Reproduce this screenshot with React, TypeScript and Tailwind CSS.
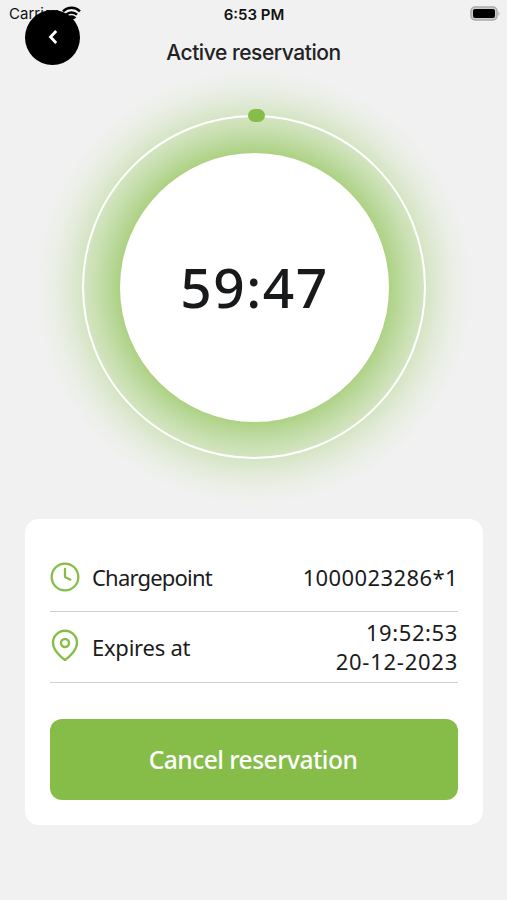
import React from 'react';

interface DetailRowProps {
  icon: React.ReactNode;
  label: React.ReactNode;
  children: React.ReactNode;
}

const ClockIcon: React.FC = () => (
  <svg className="w-8 h-8 -mt-0.5" viewBox="0 0 24 24" fill="none" stroke="#86bd49" strokeWidth="1.7" strokeLinecap="round" strokeLinejoin="round">
    <circle cx="12" cy="12" r="10" />
    <path d="M12 6v6l4 2" />
  </svg>
);

const PinIcon: React.FC = () => (
  <svg className="w-8 h-8 -mt-1" viewBox="0 0 24 24" fill="none" stroke="#86bd49" strokeWidth="1.8" strokeLinecap="round" strokeLinejoin="round">
    <path d="M21 10.300c0 4-2.300 7-5.500 10.100L12 23.300l-3.500-2.900C5.300 17.300 3 14.300 3 10.300a9 9 0 0 1 18 0z" />
    <circle cx="12" cy="10.500" r="3" />
  </svg>
);

const WifiIcon: React.FC = () => (
  <svg className="w-[19px] h-[14px] -mt-0.5" viewBox="0 0 19 14" fill="none" stroke="#000" strokeWidth="2.500">
    <path d="M1 5.300a12.200 12.200 0 0 1 17 0" />
    <path d="M4 8.700a7.900 7.900 0 0 1 11 0" />
    <path d="M6.800 11.500a3.900 3.900 0 0 1 5.400 0L9.500 13z" />
  </svg>
);

const StatusBar: React.FC = () => (
  <div className="h-[27px] grid grid-cols-3 items-center pl-[9px] pr-[7px] text-[#111]">
    <div className="flex items-center gap-[3px]">
      <span className="w-[50px] text-[15px] leading-none">Carrier</span>
      <WifiIcon />
    </div>
    <span className="pt-px -ml-px text-center text-[15px] leading-none font-semibold">6:53 PM</span>
    <svg className="justify-self-end w-[30px] h-[15px]" viewBox="0 0 30 15">
      <rect x="1" y="1" width="26" height="13" rx="4" fill="#ccc" stroke="#aaa" strokeWidth="1.500" />
      <rect x="3" y="3" width="22" height="9" rx="2" fill="#000" />
      <path d="M28.400 5.200c1.400.8 1.400 3.800 0 4.600z" fill="#aaa" />
    </svg>
  </div>
);

/* Countdown with glow and progress ring */
const Countdown: React.FC<{ time: string }> = ({ time }) => (
  <div className="relative w-[452px] h-[450px] rounded-full flex items-center justify-center bg-[radial-gradient(circle_closest-side,#add182_0%,#add182_59.500%,#bddaa0_66%,#cce1b6_72%,#d8e6c9_78%,#e4ebdb_84%,#ecefe8_90%,#f1f1f1_97%)]">
    <div className="w-[344px] h-[344px] rounded-full border-2 border-white flex items-center justify-center">
      <div className="w-[269px] h-[269px] rounded-full bg-white flex items-center justify-center">
        <span className="-mt-0.5 ml-px font-['Noto_Sans',sans-serif] font-medium text-[55px] leading-none tracking-[1.500px] text-[#18191b]">
          {time}
        </span>
      </div>
    </div>
    <div className="absolute left-[220px] top-[47px] w-[17px] h-[13px] rounded-[7px] bg-[#86bd49]" />
  </div>
);

const DetailRow: React.FC<DetailRowProps> = ({ icon, label, children }) => (
  <div className="flex items-center border-b border-[#d0d0d0]">
    <div className="-ml-px">{icon}</div>
    <span className="ml-[11px] flex-1 text-[22px]">{label}</span>
    <div className="text-right text-[22px] leading-[29px]">{children}</div>
  </div>
);

export default function App() {
  return (
    <div className="w-[507px] h-[900px] overflow-hidden bg-[#f1f1f1] flex flex-col font-['Inter','Liberation_Sans',sans-serif]">
      <StatusBar />
      <header className="relative -mt-[17px] h-[55px] shrink-0 grid grid-cols-[55px_1fr_55px] px-[25px]">
        <button className="w-[55px] h-[55px] rounded-full bg-black flex items-center justify-center">
          <svg className="w-[10px] h-[14px] -mt-px" viewBox="0 0 10 14" fill="none" stroke="#fff" strokeWidth="2.800">
            <path d="M8.200 1L2.500 7L8.200 13" />
          </svg>
        </button>
        <h1 className="pt-[29px] text-center text-[21px] leading-7 tracking-[-0.450px] font-medium text-[#222]">Active reservation</h1>
      </header>

      <div className="-mt-[3px] shrink-0 flex justify-center pl-px">
        <Countdown time="59:47" />
      </div>

      <section className="ml-[25px] mr-[24px] mt-[7px] h-[306px] shrink-0 rounded-[14px] bg-white px-[25px] pt-[25px] font-['Noto_Sans',sans-serif] text-[#1b1b1b]">
        <div className="grid grid-rows-[68px_71px]">
          <DetailRow icon={<ClockIcon />} label={<span className="tracking-[-0.800px]">Chargepoint</span>}>
            <span className="tracking-[0.400px]">1000023286*1</span>
          </DetailRow>
          <DetailRow icon={<PinIcon />} label={<span className="tracking-[-0.250px]">Expires at</span>}>
            <span className="block tracking-[0.600px]">19:52:53</span>
            <span className="block tracking-[0.750px]">20-12-2023</span>
          </DetailRow>
        </div>
        <button className="mt-[36px] w-full h-[81px] pt-0.5 pr-0.5 rounded-[12px] bg-[#86bd49] text-white text-[24.500px] tracking-[-0.500px] font-medium">
          Cancel reservation
        </button>
      </section>
    </div>
  );
}
